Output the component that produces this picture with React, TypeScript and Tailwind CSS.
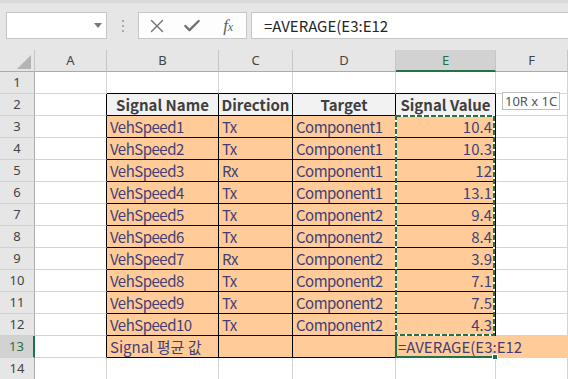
import { X, Check } from 'lucide-react';

const rows = [
  ['VehSpeed1', 'Tx', 'Component1', '10.4'],
  ['VehSpeed2', 'Tx', 'Component1', '10.3'],
  ['VehSpeed3', 'Rx', 'Component1', '12'],
  ['VehSpeed4', 'Tx', 'Component1', '13.1'],
  ['VehSpeed5', 'Tx', 'Component2', '9.4'],
  ['VehSpeed6', 'Tx', 'Component2', '8.4'],
  ['VehSpeed7', 'Rx', 'Component2', '3.9'],
  ['VehSpeed8', 'Tx', 'Component2', '7.1'],
  ['VehSpeed9', 'Tx', 'Component2', '7.5'],
  ['VehSpeed10', 'Tx', 'Component2', '4.3'],
];

const letters = ['A', 'B', 'C', 'D', 'E', 'F', ''];
const grid = 'grid grid-cols-[35px_72px_112px_74px_103px_100px_72px_1fr]';

function Toolbar() {
  return (
    <div className="h-[50px] bg-[#e6e6e6] border-t-[3px] border-t-[#d9d9d9] pt-[9px] pl-[6px] flex items-start">
      {/* name box */}
      <div className="w-[101px] h-[27px] bg-white border border-[#c6c6c6] relative">
        <svg className="absolute left-[87px] top-[10px]" width="8" height="5" viewBox="0 0 8 5">
          <path d="M0 0H8L4 5Z" fill="#7a7a7a" />
        </svg>
      </div>
      <div className="w-[31px] h-[27px] flex flex-col items-center justify-center gap-[3px]">
        <span className="w-[2px] h-[2px] bg-[#a8a8a8]" />
        <span className="w-[2px] h-[2px] bg-[#a8a8a8]" />
        <span className="w-[2px] h-[2px] bg-[#a8a8a8]" />
      </div>
      {/* cancel / enter / fx */}
      <div className="w-[109px] h-[27px] bg-[#fdfdfd] border border-[#c6c6c6] grid grid-cols-3 items-center justify-items-center text-[#707070]">
        <X size={22} strokeWidth={1.5} />
        <Check size={20} strokeWidth={2.8} />
        <span className="font-['Liberation_Serif',serif] italic text-[17px] leading-none text-[#606060]">
          f<span className="text-[12px]">x</span>
        </span>
      </div>
      <div className="ml-[4px] flex-1 h-[27px] bg-white border border-r-0 border-[#c6c6c6] pl-[12px] flex items-center text-[15px] text-[#262626]">
        =AVERAGE(E3:E12
      </div>
    </div>
  );
}

function Corner() {
  return (
    <div className="h-[22px] bg-[#e6e6e6] border-r border-b border-r-[#c6c6c6] border-b-[#ababab] relative">
      <svg className="absolute left-[17px] top-[5px]" width="14" height="14" viewBox="0 0 14 14">
        <path d="M14 0V14H0Z" fill="#b4b4b4" />
      </svg>
    </div>
  );
}

function cellCls(r: number, c: number) {
  // c: 1=A .. 7=G
  const inTable = r >= 2 && r <= 13 && c >= 2 && c <= 5;
  let right = 'border-r-[#d4d4d4]';
  let bottom = 'border-b-[#d4d4d4]';
  let bg = 'bg-white';
  if (inTable) {
    right = 'border-r-black';
    bottom = 'border-b-black';
  }
  if (r === 1 && c >= 2 && c <= 5) bottom = 'border-b-black';
  if (r >= 2 && r <= 13 && c === 1) right = 'border-r-black';
  if (r === 2 && inTable) bg = 'bg-[#f2f2f2]';
  if (r >= 3 && r <= 13 && c >= 2 && c <= 5) bg = 'bg-[#ffcc99]';
  if (r === 13 && c >= 5) {
    bg = 'bg-[#ffcc99]';
    right = 'border-r-transparent';
  }
  return `h-[22px] border-r border-b ${right} ${bottom} ${bg} flex items-center overflow-visible whitespace-nowrap`;
}

function cellText(r: number, c: number) {
  if (r === 2) {
    const h = ['Signal Name', 'Direction', 'Target', 'Signal Value'][c - 2];
    if (!h) return null;
    return <span className="w-full text-center font-bold text-[#3f3f3f]">{h}</span>;
  }
  if (r >= 3 && r <= 12 && c >= 2 && c <= 5) {
    const v = rows[r - 3][c - 2];
    if (c === 5) return <span className="w-full text-right pr-[3px] text-[#3f3f76]">{v}</span>;
    return <span className="pl-[3px] tracking-[-0.5px] text-[#3f3f76]">{v}</span>;
  }
  if (r === 13 && c === 2) return <span className="pl-[3px] text-[#3f3f76]">Signal 평균 값</span>;
  if (r === 13 && c === 5)
    return <span className="pl-[2px] text-[#3f3f76] relative z-10">=AVERAGE(E3:E12</span>;
  return null;
}

export default function App() {
  const rowNums = Array.from({ length: 14 }, (_, i) => i + 1);
  return (
    <div className="w-[568px] h-[379px] overflow-hidden bg-white font-['Noto_Sans_CJK_KR',sans-serif] text-[15px] leading-[21px]">
      <Toolbar />
      <div className="relative">
        <div className={grid}>
          <Corner />
          {letters.map((l, i) => (
            <div
              key={i}
              className={`h-[22px] border-r border-b border-r-[#c6c6c6] flex items-center justify-center font-['Noto_Sans',sans-serif] text-[13px] ${
                l === 'E'
                  ? 'bg-[#d2d2d2] border-b-2 border-b-[#217346] text-[#217346]'
                  : 'bg-[#e6e6e6] border-b-[#ababab] text-[#444]'
              }`}
            >
              {l}
            </div>
          ))}
          {rowNums.map(r => (
            <div key={r} className="contents">
              <div
                className={`h-[22px] border-b border-b-[#d0d0d0] flex items-center justify-center font-['Noto_Sans',sans-serif] text-[13px] ${
                  r === 13
                    ? 'bg-[#d2d2d2] border-r-2 border-r-[#217346] text-[#217346]'
                    : 'bg-[#e6e6e6] border-r border-r-[#ababab] text-[#444]'
                }`}
              >
                {r}
              </div>
              {[1, 2, 3, 4, 5, 6, 7].map(c => (
                <div key={c} className={cellCls(r, c)}>
                  {cellText(r, c)}
                </div>
              ))}
            </div>
          ))}
        </div>

        {/* copy range marching ants E3:E12 */}
        <svg className="absolute left-[395px] top-[65px] pointer-events-none" width="100" height="221">
          <rect x="1" y="1" width="98" height="219" fill="none" stroke="#ffffff" strokeWidth="2" />
          <rect x="1" y="1" width="98" height="219" fill="none" stroke="#217346" strokeWidth="2" strokeDasharray="5 2" />
        </svg>
        {/* edit cell E13 */}
        <div className="absolute left-[395px] top-[286px] w-[100px] h-[22px] border-l-2 border-b-2 border-[#217346] pointer-events-none" />
        <div className="absolute left-[492px] top-[304px] w-[6px] h-[6px] bg-[#217346] border border-white" />
        {/* selection size tooltip */}
        <div className="absolute left-[502px] top-[42px] h-[18px] px-[2px] bg-white border border-[#bdbdbd] flex items-center font-['Noto_Sans',sans-serif] text-[13px] text-[#555]">
          10R x 1C
        </div>
      </div>
    </div>
  );
}
